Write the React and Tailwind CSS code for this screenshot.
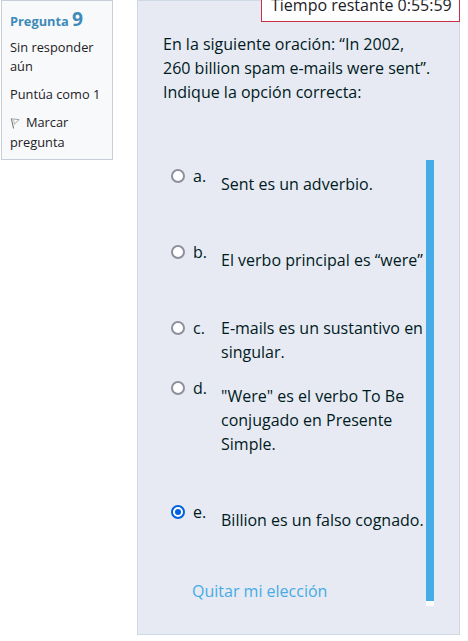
import React from "react";

const options = [
  { key: "a", lines: ["Sent es un adverbio."], row: "h-[76px]", pad: "pt-2" },
  { key: "b", lines: ["El verbo principal es “were”"], row: "h-[76px]", pad: "pt-2" },
  { key: "c", lines: ["E-mails es un sustantivo en", "singular."], row: "h-[60px]", pad: "pt-0" },
  { key: "d", lines: ['"Were" es el verbo To Be', "conjugado en Presente", "Simple."], row: "h-[124px]", pad: "pt-2" },
  { key: "e", lines: ["Billion es un falso cognado."], row: "h-[79px]", pad: "pt-2", checked: true },
];

function Radio({ checked }) {
  return (
    <span
      className={
        "mt-[5px] flex h-[14px] w-[14px] shrink-0 items-center justify-center rounded-full border-2 bg-white " +
        (checked ? "border-[#0060df]" : "border-[#8f8f9d]")
      }
    >
      {checked && <span className="h-[6px] w-[6px] rounded-full bg-[#0060df]" />}
    </span>
  );
}

function Flag() {
  return (
    <svg width="11" height="13" viewBox="0 0 11 13" fill="none" className="mr-[5px] inline-block align-[-3px]">
      <path d="M1.3 1.5 L3.6 11.5" stroke="#777" strokeWidth="1.1" />
      <path d="M1.3 1.8 L9.2 2.6 L4 7.4" stroke="#999" strokeWidth="0.9" />
      <path d="M3.6 3 L4.4 7" stroke="#aaa" strokeWidth="0.7" />
    </svg>
  );
}

function QuestionInfo() {
  return (
    <aside className="h-[160px] w-28 shrink-0 border border-[#c8ced8] bg-[#f8f9fa] pl-2 text-[12.8px] leading-[19px] text-[#1d2125]">
      <h3 className="h-[37px] whitespace-nowrap pt-[6px] font-bold leading-6 text-[#3d8bb9]">
        Pregunta <span className="text-[19.2px]">9</span>
      </h3>
      <p>Sin responder<br />aún</p>
      <p className="mt-[9px]">Puntúa como 1</p>
      <p className="mt-2 leading-5"><Flag />Marcar<br />pregunta</p>
    </aside>
  );
}

export default function App() {
  return (
    <main className="flex h-[641px] w-[468px] overflow-hidden bg-white pl-px font-['Open_Sans','Noto_Sans',sans-serif]">
      <QuestionInfo />
      <section className="relative ml-6 h-[635px] w-[323px] border border-[#ced9e6] bg-[#e7eaf2] pl-[25px] pt-[31px] text-base leading-6 text-[#001a1e]">
        <div className="absolute -right-px -top-px h-[22px] w-[199px] whitespace-nowrap border border-t-0 border-[#ca3143] bg-white pl-[9px] leading-[10px] text-[#1d2125]">
          Tiempo restante 0:55:59
        </div>
        <div className="whitespace-nowrap">
          En la siguiente oración: “In 2002,<br />
          260 billion spam e-mails were sent”.<br />
          Indique la opción correcta:
        </div>
        <div className="mt-14 flex h-[446px]">
          <div className="w-[263px] pl-2 pt-1">
            {options.map((option) => (
              <div key={option.key} className={"flex " + option.row}>
                <Radio checked={option.checked} />
                <span className="ml-2 w-7 shrink-0">{option.key}.</span>
                <div className={"whitespace-nowrap " + option.pad}>
                  {option.lines.map((line) => <div key={line}>{line}</div>)}
                </div>
              </div>
            ))}
            <a className="ml-[21px] text-[#45ace5]">Quitar mi elección</a>
          </div>
          <div className="h-[446px] w-2 bg-[#fafdfe]">
            <div className="h-[441px] bg-[#45ace8]" />
          </div>
        </div>
      </section>
    </main>
  );
}
